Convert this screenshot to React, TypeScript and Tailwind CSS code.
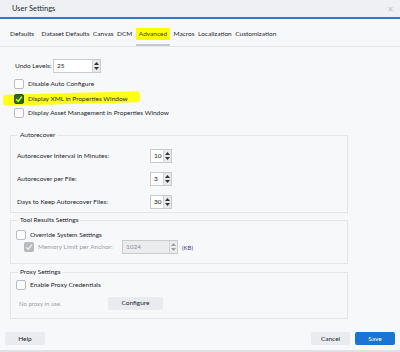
import React from "react";

const font = { fontFamily: 'Lato, "Noto Sans", sans-serif' };

function Check({ checked, disabled, green }: { checked?: boolean; disabled?: boolean; green?: boolean }) {
  if (checked && green) {
    return (
      <span className="w-[10px] h-[10px] rounded-[2px] bg-[#2f6b12] border border-[#26590c] flex items-center justify-center shrink-0">
        <svg width="8" height="8" viewBox="0 0 8 8">
          <path d="M1.2 4.2 L3.2 6.2 L6.9 1.6" fill="none" stroke="#d8f54a" strokeWidth="1.5" />
        </svg>
      </span>
    );
  }
  if (checked && disabled) {
    return (
      <span className="w-[10px] h-[10px] rounded-[2px] bg-[#b7b9bd] flex items-center justify-center shrink-0">
        <svg width="8" height="8" viewBox="0 0 8 8">
          <path d="M1.2 4.2 L3.2 6.2 L6.9 1.6" fill="none" stroke="#eceef0" strokeWidth="1.4" />
        </svg>
      </span>
    );
  }
  return <span className="w-[10px] h-[10px] rounded-[2px] bg-white border border-[#b9bdc4] shrink-0" />;
}

function Spin({ value, w, disabled }: { value: string; w: string; disabled?: boolean }) {
  return (
    <div
      className={`flex h-[14px] border border-[#c9cbcf] ${w} ${disabled ? "bg-[#ebecee] text-[#8b8e94]" : "bg-white text-[#222]"}`}
    >
      <span className="flex-1 pl-[3px] text-[6.5px] leading-[12px]">{value}</span>
      <span className={`w-[8px] flex flex-col items-center justify-center gap-[2px] border-l border-[#d3d5d8] ${disabled ? "bg-[#ebecee]" : "bg-[#e8e9eb]"}`}>
        <svg width="5" height="3" viewBox="0 0 5 3"><path d="M0 3 L2.5 0 L5 3Z" fill={disabled ? "#9a9da2" : "#333"} /></svg>
        <svg width="5" height="3" viewBox="0 0 5 3"><path d="M0 0 L2.5 3 L5 0Z" fill={disabled ? "#9a9da2" : "#333"} /></svg>
      </span>
    </div>
  );
}

export default function App() {
  const tabs = ["Defaults", "Dataset Defaults", "Canvas", "DCM", "Advanced", "Macros", "Localization", "Customization"];
  return (
    <div style={font} className="w-[400px] h-[352px] bg-[#f7f8fa] flex flex-col text-[#25272b] overflow-hidden">
      <div className="h-[17px] bg-[#eef0f3] flex items-center justify-between pl-[12px] pr-[6px]">
        <span className="text-[7.5px] text-[#2a2c30]">User Settings</span>
        <span className="text-[8px] text-[#c4c7cc]">✕</span>
      </div>
      <div className="h-[2px] bg-[#2f7ad1]" />
      <div className="h-[28px] flex items-stretch pl-[10px] gap-[3.5px] border-b border-[#e3e5e8] text-[6.5px]">
        {tabs.map((t, i) => (
          <div key={t} className={`flex flex-col items-center ${i === 1 ? "ml-[4px]" : ""}`}>
            <div className="flex-1 flex items-center pt-[5px]">
              <span className={t === "Advanced" ? "bg-[#ffff00] text-[#3a3f00] px-[3px] py-[1px]" : "text-[#25272b]"}>{t}</span>
            </div>
            <div className={`h-[2px] w-full ${t === "Advanced" ? "bg-[#c5c9d0]" : ""}`} />
          </div>
        ))}
      </div>

      <div className="flex-1 flex flex-col px-[10px] pt-[12px] text-[6.5px]">
        <div className="flex items-center pl-[5px] h-[14px]">
          <span className="w-[38px]">Undo Levels:</span>
          <Spin value="25" w="w-[48px]" />
        </div>
        <div className="flex flex-col gap-[4.5px] mt-[6px] pl-[4px]">
          <div className="flex items-center gap-[4px] h-[10px]">
            <Check />
            <span>Disable Auto Configure</span>
          </div>
          <div className="flex items-center h-[10px] relative">
            <span className="absolute left-[-11px] top-[-1px] w-[137px] h-[11px] bg-[#ffff1a] -rotate-[1.5deg] rounded-[3px]" />
            <span className="relative flex items-center gap-[4px]">
              <Check checked green />
              <span>Display XML in Properties Window</span>
            </span>
          </div>
          <div className="flex items-center gap-[4px] h-[10px]">
            <Check />
            <span>Display Asset Management in Properties Window</span>
          </div>
        </div>

        <fieldset className="mt-[12px] w-[338px] h-[83px] border border-[#e3e5e8] pl-[6px] pr-0">
          <legend className="px-[2px] ml-[1px] leading-[10px]">Autorecover</legend>
          <div className="flex flex-col gap-[9px] mt-[9px]">
            {[
              ["Autorecover Interval in Minutes:", "10"],
              ["Autorecover per File:", "3"],
              ["Days to Keep Autorecover Files:", "30"],
            ].map(([l, v]) => (
              <div key={l} className="flex items-center h-[14px]">
                <span className="w-[133px]">{l}</span>
                <Spin value={v} w="w-[22px]" />
              </div>
            ))}
          </div>
        </fieldset>

        <fieldset className="mt-[2px] w-[338px] h-[49px] border border-[#e3e5e8] pl-[5px]">
          <legend className="px-[2px] ml-[2px] leading-[10px]">Tool Results Settings</legend>
          <div className="flex items-center gap-[4px] h-[10px] mt-[5px]">
            <Check />
            <span>Override System Settings</span>
          </div>
          <div className="flex items-center h-[14px] mt-[0px] pl-[8px]">
            <Check checked disabled />
            <span className="ml-[4px] w-[84px] text-[#9a9da3]">Memory Limit per Anchor:</span>
            <Spin value="1024" w="w-[56px]" disabled />
            <span className="ml-[4px] text-[#3b3f8f] text-[6px]">(KB)</span>
          </div>
        </fieldset>

        <fieldset className="mt-[3px] w-[338px] h-[52px] border border-[#e3e5e8] pl-[5px]">
          <legend className="px-[2px] ml-[2px] leading-[10px]">Proxy Settings</legend>
          <div className="flex items-center gap-[4px] h-[10px] mt-[3px]">
            <Check />
            <span>Enable Proxy Credentials</span>
          </div>
          <div className="flex items-center h-[14px] mt-[6px] pl-[3px]">
            <span className="w-[89px] text-[#9ea1a6] text-[6px]">No proxy in use.</span>
            <button className="w-[55px] h-[13px] bg-[#e9ebee] rounded-[2px] text-[6.5px] text-[#25272b]">Configure</button>
          </div>
        </fieldset>

        <div className="flex-1" />
      </div>
      <div className="h-[24px] flex items-start justify-between px-[5px] pt-[6px]">
        <button className="w-[40px] h-[13px] bg-[#e9ebee] rounded-[2px] text-[6.5px]">Help</button>
        <div className="flex gap-[5px]">
          <button className="w-[39px] h-[13px] bg-[#e9ebee] rounded-[2px] text-[6.5px]">Cancel</button>
          <button className="w-[40px] h-[13px] bg-[#1b73d6] rounded-[2px] text-[6.5px] text-white">Save</button>
        </div>
      </div>
      <div className="h-[2px] bg-[#dfe1e4]" />
    </div>
  );
}
